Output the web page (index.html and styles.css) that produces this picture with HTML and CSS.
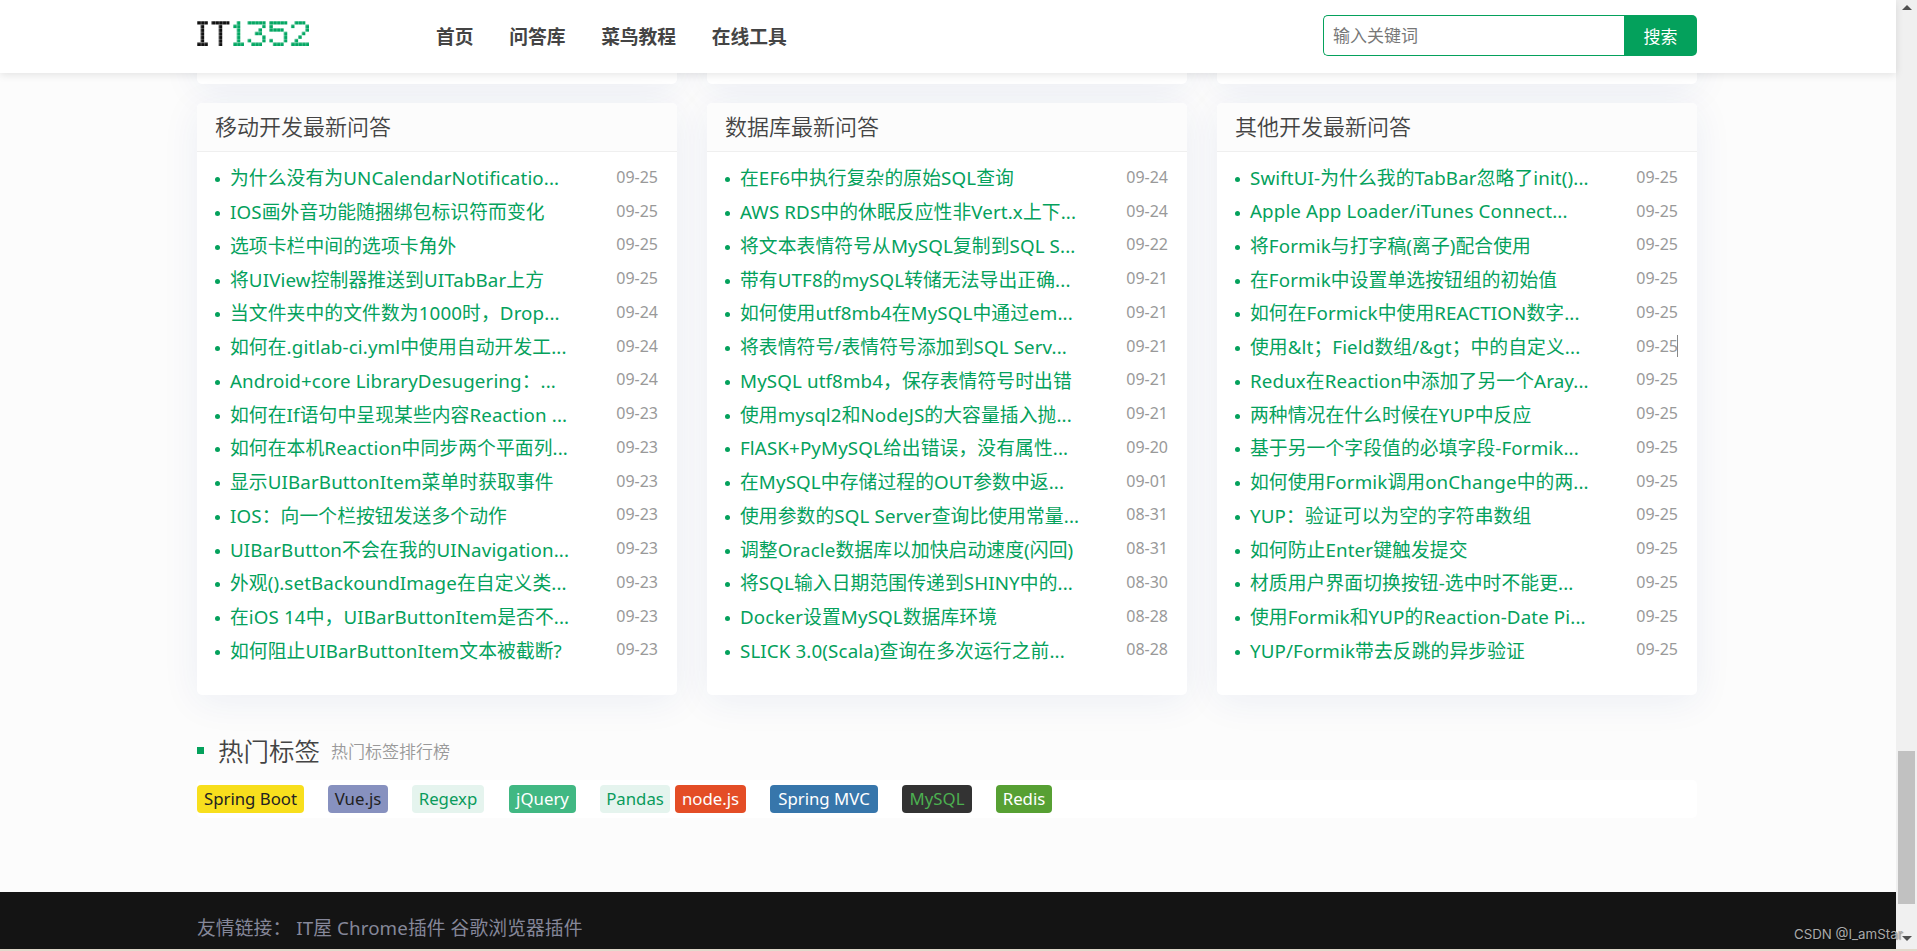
FILE: index.html
```html
<!DOCTYPE html>
<html lang="zh-CN">
<head>
  <meta charset="UTF-8" />
  <meta name="viewport" content="width=device-width, initial-scale=1" />
  <title>IT1352</title>
  <link rel="stylesheet" href="styles.css">
</head>
<body>
  <div class="page">
    <!-- HEADER -->
    <header class="header">
      <div class="container header-inner">
        <a class="logo" href="#">
          <svg width="112" height="25" viewBox="0 0 31 7" preserveAspectRatio="none" role="img" aria-label="IT1352">
            <g fill="#111">
              <rect x="0" y="0" width="3" height="1"/><rect x="1" y="1" width="1" height="5"/><rect x="0" y="6" width="3" height="1"/>
              <rect x="4" y="0" width="5" height="1"/><rect x="6" y="1" width="1" height="6"/>
            </g>
            <g fill="#04a763">
              <rect x="11" y="0" width="1" height="6"/><rect x="10" y="1" width="1" height="1"/><rect x="10" y="6" width="3" height="1"/>
              <rect x="14" y="0" width="5" height="1"/><rect x="18" y="1" width="1" height="1"/><rect x="17" y="2" width="1" height="1"/><rect x="16" y="3" width="2" height="1"/><rect x="18" y="4" width="1" height="2"/><rect x="14" y="5" width="1" height="1"/><rect x="15" y="6" width="3" height="1"/>
              <rect x="20" y="0" width="5" height="1"/><rect x="20" y="1" width="1" height="2"/><rect x="21" y="2" width="3" height="1"/><rect x="24" y="3" width="1" height="3"/><rect x="20" y="5" width="1" height="1"/><rect x="21" y="6" width="3" height="1"/>
              <rect x="27" y="0" width="3" height="1"/><rect x="26" y="1" width="1" height="1"/><rect x="30" y="1" width="1" height="2"/><rect x="29" y="3" width="1" height="1"/><rect x="28" y="4" width="1" height="1"/><rect x="27" y="5" width="1" height="1"/><rect x="26" y="6" width="5" height="1"/>
            </g>
            <!-- thin gaps between the dots -->
            <defs>
              <pattern id="gaps" width="1" height="1" patternUnits="userSpaceOnUse">
                <rect width="1" height="0.14" fill="#fff" fill-opacity="0.5"/><rect width="0.14" height="1" fill="#fff" fill-opacity="0.5"/>
              </pattern>
            </defs>
            <rect width="31" height="7" fill="url(#gaps)"/>
          </svg>
        </a>
        <nav class="nav">
          <a href="#">首页</a>
          <a href="#">问答库</a>
          <a href="#">菜鸟教程</a>
          <a href="#">在线工具</a>
        </nav>
        <form class="search">
          <input type="text" placeholder="输入关键词" />
          <button type="button">搜索</button>
        </form>
      </div>
    </header>

    <main class="main">
      <div class="container">
        <div class="cards cards-prev">
          <div class="card"></div>
          <div class="card"></div>
          <div class="card"></div>
        </div>

        <!-- LATEST QUESTIONS -->
        <div class="cards">
          <section class="card">
            <h3>移动开发最新问答</h3>
            <ul>
              <li><a href="#">为什么没有为UNCalendarNotificatio...</a><span>09-25</span></li>
              <li><a href="#">IOS画外音功能随捆绑包标识符而变化</a><span>09-25</span></li>
              <li><a href="#">选项卡栏中间的选项卡角外</a><span>09-25</span></li>
              <li><a href="#">将UIView控制器推送到UITabBar上方</a><span>09-25</span></li>
              <li><a href="#">当文件夹中的文件数为1000时，Drop...</a><span>09-24</span></li>
              <li><a href="#">如何在.gitlab-ci.yml中使用自动开发工...</a><span>09-24</span></li>
              <li><a href="#">Android+core LibraryDesugering：...</a><span>09-24</span></li>
              <li><a href="#">如何在If语句中呈现某些内容Reaction ...</a><span>09-23</span></li>
              <li><a href="#">如何在本机Reaction中同步两个平面列...</a><span>09-23</span></li>
              <li><a href="#">显示UIBarButtonItem菜单时获取事件</a><span>09-23</span></li>
              <li><a href="#">IOS：向一个栏按钮发送多个动作</a><span>09-23</span></li>
              <li><a href="#">UIBarButton不会在我的UINavigation...</a><span>09-23</span></li>
              <li><a href="#">外观().setBackoundImage在自定义类...</a><span>09-23</span></li>
              <li><a href="#">在iOS 14中，UIBarButtonItem是否不...</a><span>09-23</span></li>
              <li><a href="#">如何阻止UIBarButtonItem文本被截断?</a><span>09-23</span></li>
            </ul>
          </section>

          <section class="card">
            <h3>数据库最新问答</h3>
            <ul>
              <li><a href="#">在EF6中执行复杂的原始SQL查询</a><span>09-24</span></li>
              <li><a href="#">AWS RDS中的休眠反应性非Vert.x上下...</a><span>09-24</span></li>
              <li><a href="#">将文本表情符号从MySQL复制到SQL S...</a><span>09-22</span></li>
              <li><a href="#">带有UTF8的mySQL转储无法导出正确...</a><span>09-21</span></li>
              <li><a href="#">如何使用utf8mb4在MySQL中通过em...</a><span>09-21</span></li>
              <li><a href="#">将表情符号/表情符号添加到SQL Serv...</a><span>09-21</span></li>
              <li><a href="#">MySQL utf8mb4，保存表情符号时出错</a><span>09-21</span></li>
              <li><a href="#">使用mysql2和NodeJS的大容量插入抛...</a><span>09-21</span></li>
              <li><a href="#">FlASK+PyMySQL给出错误，没有属性...</a><span>09-20</span></li>
              <li><a href="#">在MySQL中存储过程的OUT参数中返...</a><span>09-01</span></li>
              <li><a href="#">使用参数的SQL Server查询比使用常量...</a><span>08-31</span></li>
              <li><a href="#">调整Oracle数据库以加快启动速度(闪回)</a><span>08-31</span></li>
              <li><a href="#">将SQL输入日期范围传递到SHINY中的...</a><span>08-30</span></li>
              <li><a href="#">Docker设置MySQL数据库环境</a><span>08-28</span></li>
              <li><a href="#">SLICK 3.0(Scala)查询在多次运行之前...</a><span>08-28</span></li>
            </ul>
          </section>

          <section class="card">
            <h3>其他开发最新问答</h3>
            <ul>
              <li><a href="#">SwiftUI-为什么我的TabBar忽略了init()...</a><span>09-25</span></li>
              <li><a href="#">Apple App Loader/iTunes Connect...</a><span>09-25</span></li>
              <li><a href="#">将Formik与打字稿(离子)配合使用</a><span>09-25</span></li>
              <li><a href="#">在Formik中设置单选按钮组的初始值</a><span>09-25</span></li>
              <li><a href="#">如何在Formick中使用REACTION数字...</a><span>09-25</span></li>
              <li><a href="#">使用&amp;lt；Field数组/&amp;gt；中的自定义...</a><span class="caret">09-25</span></li>
              <li><a href="#">Redux在Reaction中添加了另一个Aray...</a><span>09-25</span></li>
              <li><a href="#">两种情况在什么时候在YUP中反应</a><span>09-25</span></li>
              <li><a href="#">基于另一个字段值的必填字段-Formik...</a><span>09-25</span></li>
              <li><a href="#">如何使用Formik调用onChange中的两...</a><span>09-25</span></li>
              <li><a href="#">YUP：验证可以为空的字符串数组</a><span>09-25</span></li>
              <li><a href="#">如何防止Enter键触发提交</a><span>09-25</span></li>
              <li><a href="#">材质用户界面切换按钮-选中时不能更...</a><span>09-25</span></li>
              <li><a href="#">使用Formik和YUP的Reaction-Date Pi...</a><span>09-25</span></li>
              <li><a href="#">YUP/Formik带去反跳的异步验证</a><span>09-25</span></li>
            </ul>
          </section>
        </div>

        <!-- HOT TAGS -->
        <div class="tags-title">
          <h2>热门标签</h2>
          <small>热门标签排行榜</small>
        </div>
        <div class="tags">
          <a class="tag spring" href="#">Spring Boot</a>
          <a class="tag vue" href="#">Vue.js</a>
          <a class="tag regexp" href="#">Regexp</a>
          <a class="tag jquery" href="#">jQuery</a>
          <a class="tag pandas" href="#">Pandas</a>
          <a class="tag node" href="#">node.js</a>
          <a class="tag mvc" href="#">Spring MVC</a>
          <a class="tag mysql" href="#">MySQL</a>
          <a class="tag redis" href="#">Redis</a>
        </div>
      </div>
    </main>

    <footer class="footer">
      <div class="container">
        <span>友情链接：</span>
        <a href="#">IT屋</a>
        <a href="#">Chrome插件</a>
        <a href="#">谷歌浏览器插件</a>
      </div>
    </footer>
  </div>

  <div class="scrollbar">
    <i class="arrow up"></i>
    <i class="thumb"></i>
    <i class="arrow down"></i>
  </div>
  <div class="strip"></div>
  <div class="watermark">CSDN @I_amStar</div>
</body>
</html>
```
FILE: styles.css
```css
* {
  box-sizing: border-box;
}
body {
  margin: 0;
  height: 951px;
  overflow: hidden;
  position: relative;
  display: grid;
  grid-template-columns: 1fr 21px;
  grid-template-rows: 949px 2px;
  background: #fcfcfc;
  color: #444;
  font-family: "Noto Sans", "Noto Sans CJK SC", sans-serif;
  font-size: 18.75px;
}
a {
  color: inherit;
  text-decoration: none;
}
.page {
  display: flex;
  flex-direction: column;
  min-width: 0;
}
.container {
  width: 1500px;
  margin-left: 197px;
}

/* Header */
.header {
  height: 73px;
  background: #fff;
  box-shadow: 0 2px 8px rgba(0, 0, 0, 0.1);
  position: relative;
  z-index: 2;
}
.header-inner {
  display: flex;
  height: 73px;
}
.logo {
  width: 239px;
  padding-top: 21px;
}
.logo svg {
  display: block;
}
.nav {
  display: flex;
  gap: 35.7px;
  line-height: 73px;
  font-weight: 700;
}
.search {
  display: flex;
  width: 374px;
  height: 41px;
  margin: 15px 0 0 auto;
}
.search input {
  flex: 1;
  min-width: 0;
  padding: 0 9px;
  border: 1px solid #04a15c;
  border-right: 0;
  border-radius: 5px 0 0 5px;
  font: inherit;
  font-size: 17px;
}
.search input::placeholder {
  color: #777;
}
.search button {
  width: 73px;
  padding: 0;
  border: 0;
  border-radius: 0 5px 5px 0;
  background: #04a15c;
  color: #fff;
  font: inherit;
  font-size: 17px;
}

/* Question cards */
.main {
  height: 819px;
  overflow: hidden;
}
.cards {
  display: grid;
  grid-template-columns: repeat(3, 480px);
  gap: 30px;
}
.cards-prev {
  margin-bottom: 19px;
}
.cards-prev .card {
  height: 111px;
  margin-top: -100px;
}
.card {
  height: 592px;
  background: #fff;
  border-radius: 5px;
  box-shadow: 0 6px 38px rgba(31, 55, 140, 0.07);
}
.card h3 {
  margin: 0;
  height: 49px;
  padding: 0 18px;
  line-height: 47px;
  font-size: 22px;
  font-weight: 350;
  background: #fcfcfc;
  border-bottom: 1px solid #efefef;
  border-radius: 5px 5px 0 0;
}
.card ul {
  margin: 0;
  padding: 8px 19px 0 18px;
  list-style: none;
}
.card li {
  display: flex;
  align-items: center;
  height: 33.75px;
  white-space: nowrap;
  color: #04a15c;
  letter-spacing: 0.12px;
}
.card li::before {
  content: "";
  width: 5px;
  height: 5px;
  margin: 6px 10px 0 0;
  border-radius: 50%;
  background: #04a15c;
}
.card li span {
  margin-left: auto;
  color: #999;
  font-size: 16px;
  letter-spacing: 0;
}
.card li .caret {
  box-shadow: inset -1px 0 0 #888;
}

/* Tags */
.tags-title {
  display: flex;
  align-items: center;
  height: 60px;
  margin-top: 26px;
}
.tags-title::before {
  content: "";
  width: 7px;
  height: 7px;
  margin-top: -1px;
  background: #04a15c;
}
.tags-title h2 {
  margin: -3px 11px 0 14px;
  font-size: 25.5px;
  font-weight: 350;
}
.tags-title small {
  margin-top: -1px;
  color: #999;
  font-size: 17px;
  font-weight: 350;
}
.tags {
  display: flex;
  align-items: center;
  gap: 24px;
  height: 38px;
  margin-top: -1px;
  background: #fff;
  border-radius: 5px;
}
.tag {
  height: 28px;
  line-height: 27px;
  border-radius: 4px;
  text-align: center;
  font-size: 16.8px;
  color: #fff;
}
.tag.spring {
  width: 107px;
  background: #f8df1d;
  color: #222;
}
.tag.vue {
  width: 60px;
  background: #8791bf;
  color: #222;
}
.tag.regexp {
  width: 72px;
  margin-right: 1px;
  background: #e5f4ee;
  color: #0a9b5c;
}
.tag.jquery {
  width: 67px;
  background: #41b883;
}
.tag.pandas {
  width: 70px;
  margin-right: -19px;
  background: #e5f4ee;
  color: #0a9b5c;
}
.tag.node {
  width: 71px;
  background: #e44d26;
}
.tag.mvc {
  width: 108px;
  background: #3776ab;
}
.tag.mysql {
  width: 70px;
  background: #333;
  color: #4caf50;
}
.tag.redis {
  width: 56px;
  background: #57a033;
}

/* Footer */
.footer {
  height: 57px;
  padding-top: 8px;
  line-height: 56px;
  letter-spacing: 0.1px;
  background: #141414;
  color: #858799;
}

/* Scrollbar */
.scrollbar {
  display: flex;
  flex-direction: column;
  align-items: center;
  padding: 5px 0 8px;
  background: #f0f0f0;
}
.arrow {
  border: 5px solid transparent;
}
.arrow.up {
  border-top: 0;
  border-bottom-color: #505050;
}
.arrow.down {
  margin-top: auto;
  border-bottom: 0;
  border-top-color: #505050;
}
.thumb {
  width: 17px;
  height: 153px;
  margin-top: 741px;
  background: #c1c1c1;
}
.strip {
  grid-column: 1 / 3;
  background: #e2d9cc;
}
.watermark {
  position: absolute;
  left: 1794px;
  top: 925px;
  font: 13.3px/18px Inter, Roboto, sans-serif;
  color: #aaa;
  text-shadow: 1px 1px 1px rgba(0, 0, 0, 0.4);
}
```
